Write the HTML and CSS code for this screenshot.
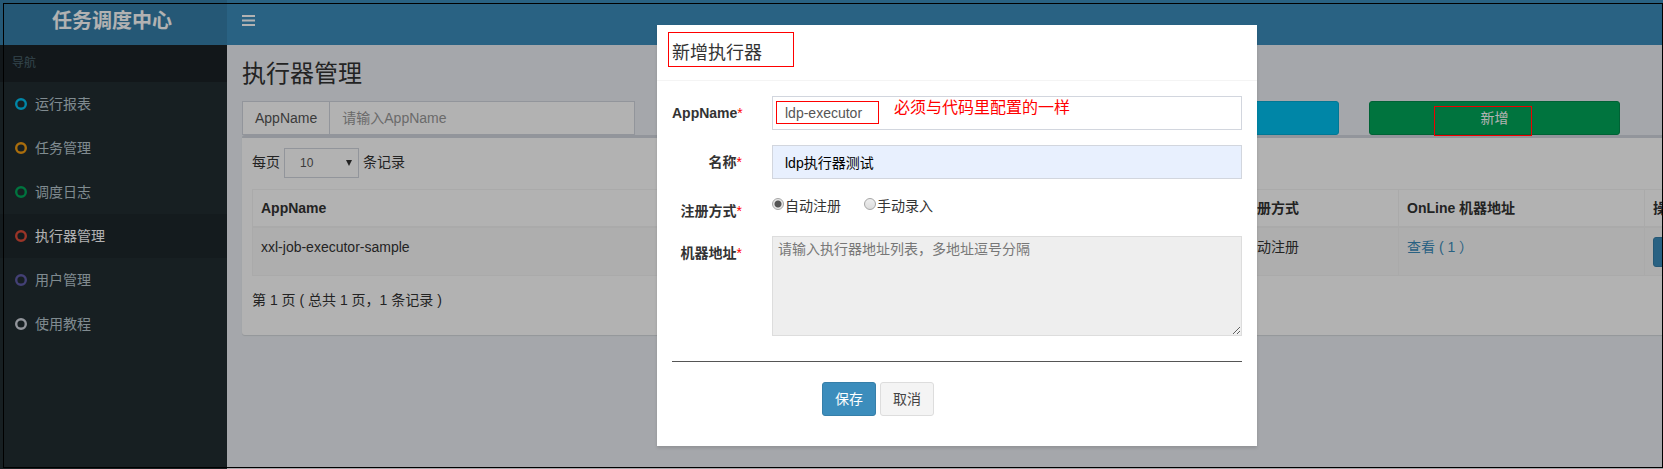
FILE: index.html
```html
<!DOCTYPE html>
<html lang="zh-CN">
<head>
<meta charset="utf-8">
<title>任务调度中心</title>
<link rel="stylesheet" href="styles.css">
</head>
<body>
<div class="app">
  <header class="topbar">
    <a class="logo" href="#">任务调度中心</a>
    <nav class="navbar">
      <button class="toggle" type="button" aria-label="切换导航">
        <svg width="13" height="11" viewBox="0 0 13 11"><path d="M0 0h13v2H0zM0 4.500h13v2H0zM0 9h13v2H0z" fill="#fff"/></svg>
      </button>
    </nav>
  </header>
  <div class="main">
    <aside class="sidebar">
      <div class="nav-title">导航</div>
      <a class="nav-item aqua" href="#"><svg class="ring" viewBox="0 0 12 12"><circle cx="6" cy="6" r="4.800"/></svg>运行报表</a>
      <a class="nav-item yellow" href="#"><svg class="ring" viewBox="0 0 12 12"><circle cx="6" cy="6" r="4.800"/></svg>任务管理</a>
      <a class="nav-item green" href="#"><svg class="ring" viewBox="0 0 12 12"><circle cx="6" cy="6" r="4.800"/></svg>调度日志</a>
      <a class="nav-item red active" href="#"><svg class="ring" viewBox="0 0 12 12"><circle cx="6" cy="6" r="4.800"/></svg>执行器管理</a>
      <a class="nav-item purple" href="#"><svg class="ring" viewBox="0 0 12 12"><circle cx="6" cy="6" r="4.800"/></svg>用户管理</a>
      <a class="nav-item gray" href="#"><svg class="ring" viewBox="0 0 12 12"><circle cx="6" cy="6" r="4.800"/></svg>使用教程</a>
    </aside>
    <main class="content">
      <h1 class="page-title">执行器管理</h1>
      <div class="filters">
        <div class="input-group">
          <label class="addon" for="q-app">AppName</label>
          <input class="input" id="q-app" type="text" placeholder="请输入AppName">
        </div>
        <button class="btn btn-info" type="button">搜索</button>
        <button class="btn btn-success" type="button">新增</button>
      </div>
      <section class="box">
        <div class="length">
          <label for="len">每页</label>
          <span class="select-wrap"><select class="select" id="len"><option>10</option></select></span>
          <span>条记录</span>
        </div>
        <table class="table">
          <colgroup><col><col><col class="col-type"><col class="col-online"><col class="col-action"></colgroup>
          <thead><tr><th>AppName</th><th>名称</th><th>注册方式</th><th>OnLine 机器地址</th><th>操作</th></tr></thead>
          <tbody><tr>
            <td>xxl-job-executor-sample</td><td>示例执行器</td><td>自动注册</td>
            <td><a class="link" href="#">查看 ( 1 ）</a></td>
            <td><button class="btn btn-primary btn-small" type="button">操作</button></td>
          </tr></tbody>
        </table>
        <div class="info">第 1 页 ( 总共 1 页，1 条记录 )</div>
      </section>
    </main>
  </div>
  <div class="backdrop">
    <div class="modal" role="dialog" aria-labelledby="modal-title">
      <div class="modal-header">
        <h4 class="modal-title" id="modal-title">新增执行器</h4>
        <span class="mark mark-title"></span>
      </div>
      <form class="modal-body">
        <div class="form-row">
          <label class="label" for="f-app">AppName<span class="star">*</span></label>
          <div class="field">
            <input class="input" id="f-app" type="text" value="ldp-executor">
            <span class="mark mark-field"></span>
            <span class="note">必须与代码里配置的一样</span>
          </div>
        </div>
        <div class="form-row">
          <label class="label" for="f-name">名称<span class="star">*</span></label>
          <div class="field"><input class="input autofill" id="f-name" type="text" value="ldp执行器测试"></div>
        </div>
        <div class="form-row">
          <span class="label" id="f-type">注册方式<span class="star">*</span></span>
          <div class="field radios" role="radiogroup" aria-labelledby="f-type">
            <label class="radio"><input type="radio" name="type" checked>自动注册</label>
            <label class="radio"><input type="radio" name="type">手动录入</label>
          </div>
        </div>
        <div class="form-row">
          <label class="label" for="f-addr">机器地址<span class="star">*</span></label>
          <div class="field"><textarea class="textarea" id="f-addr" readonly placeholder="请输入执行器地址列表，多地址逗号分隔"></textarea></div>
        </div>
        <hr class="rule">
        <div class="actions">
          <button class="btn btn-primary" type="button">保存</button>
          <button class="btn btn-default" type="button">取消</button>
        </div>
      </form>
    </div>
  </div>
  <span class="mark mark-add"></span>
</div>
<div class="frame"></div>
</body>
</html>
```
FILE: styles.css
```css
* { box-sizing: border-box; }
html, body { margin: 0; height: 100%; overflow: hidden; }
body {
  font: 14px/20px "Liberation Sans", "Noto Sans CJK SC", sans-serif;
  color: #333;
  background: #ecf0f5;
}
a { text-decoration: none; }
button, input, select, textarea { font: inherit; margin: 0; }

/* The console is wider than the window and runs off its right edge. */
.app {
  position: relative;
  width: calc(100% + 254px);
  min-height: 100%;
  display: flex;
  flex-direction: column;
}
.topbar { display: flex; height: 45px; background: #3c8dbc; }
.logo {
  width: 227px;
  padding-right: 3px;
  background: #367fa9;
  color: #fff;
  font-size: 20px;
  font-weight: bold;
  line-height: 42px;
  text-align: center;
}
.navbar { padding: 0 15px; }
.toggle { display: flex; padding: 15px 0; border: 0; background: none; }
.main { flex: 1; display: flex; }

.sidebar { width: 227px; background: #222d32; }
.nav-title {
  padding: 8px 12px 9px;
  background: #1a2226;
  color: #4b646f;
  font-size: 12px;
}
.nav-item {
  display: flex;
  align-items: center;
  gap: 8px;
  height: 44px;
  padding-left: 15px;
  color: #b8c7ce;
}
.nav-item.active { background: #1e282c; color: #fff; }
.ring { width: 12px; height: 12px; fill: none; stroke-width: 2.4; }
.aqua .ring { stroke: #00c0ef; }
.yellow .ring { stroke: #f39c12; }
.green .ring { stroke: #00a65a; }
.red .ring { stroke: #dd4b39; }
.purple .ring { stroke: #605ca8; }
.gray .ring { stroke: #d2d6de; }

.content { flex: 1; padding: 16px 10px 0 15px; }
.page-title { margin: 0 0 14px; font-size: 24px; font-weight: normal; line-height: 26px; }
.filters { display: grid; grid-template-columns: repeat(12, 1fr); column-gap: 30px; margin-right: 5px; }
.input-group { grid-column: 1 / span 3; display: flex; }
.addon {
  flex: none;
  padding: 6px 12px;
  border: 1px solid #d2d6de;
  border-right: 0;
  background: #fff;
  color: #555;
}
.input {
  display: block;
  width: 100%;
  min-width: 0;
  height: 34px;
  padding: 6px 12px;
  border: 1px solid #d2d6de;
  border-radius: 0;
  background: #fff;
  color: #555;
}
.input::placeholder { color: #999; opacity: 1; }
.input.autofill { background: #e8f0fe; color: #000; }
.btn {
  height: 34px;
  padding: 0 12px;
  border: 1px solid transparent;
  border-radius: 3px;
  color: #fff;
}
.btn-info { grid-column: 7 / span 2; background: #00c0ef; border-color: #00acd6; }
.btn-success { grid-column: 9 / span 2; background: #00a65a; border-color: #008d4c; }
.btn-primary { background: #3c8dbc; border-color: #367fa9; }
.btn-default { background: #f4f4f4; border-color: #ddd; color: #444; }
.btn-small { height: 30px; padding: 0 10px; font-size: 12px; display: block; }

.box {
  padding: 10px 0 25px 10px;
  border-top: 3px solid #d2d6de;
  border-radius: 3px;
  background: #fff;
  box-shadow: 0 1px 1px rgba(0, 0, 0, .1);
}
.length { display: flex; align-items: flex-start; gap: 4px; margin-bottom: 11px; line-height: 28px; }
.select-wrap { position: relative; display: block; }
.select-wrap::after {
  content: "";
  position: absolute;
  right: 7px;
  top: 12px;
  width: 6px;
  height: 6px;
  background: #333;
  clip-path: polygon(0 0, 100% 0, 50% 100%);
}
.select {
  display: block;
  appearance: none;
  width: 75px;
  height: 30px;
  padding: 0 15px;
  border: 1px solid #d2d6de;
  border-radius: 0;
  background: #fff;
  color: #555;
  font-size: 12px;
}
.table { width: 100%; table-layout: fixed; border-collapse: separate; border-spacing: 0; border: 1px solid #f4f4f4; }
.table th, .table td { padding: 8px; text-align: left; vertical-align: top; border-right: 1px solid #f4f4f4; }
.table th { border-bottom: 2px solid #f4f4f4; }
.table td { padding-top: 9px; background: #f9f9f9; }
.col-type { width: 164px; }
.col-online { width: 246px; }
.col-action { width: 261px; }
.link { color: #3c8dbc; }
.info { padding-top: 14px; }

.backdrop {
  position: absolute;
  inset: 0;
  padding: 25px 3px 0 0;
  background: rgba(0, 0, 0, .3);
}
.modal {
  width: 600px;
  margin: 0 auto;
  background: #fff;
  box-shadow: 0 2px 3px rgba(0, 0, 0, .125);
}
.modal-header { position: relative; padding: 16px 15px 14px; border-bottom: 1px solid #f4f4f4; }
.modal-title { margin: 0; font-size: 18px; font-weight: normal; line-height: 25px; }
.modal-body { padding: 15px 15px 30px; }
.form-row { display: flex; gap: 30px; margin-bottom: 15px; }
.label { width: 70px; padding-top: 7px; font-weight: bold; text-align: right; white-space: nowrap; }
.star { color: red; font-weight: normal; }
.field { position: relative; flex: 1; }
.radios { display: flex; gap: 23px; padding-top: 2px; }
.radio { display: flex; align-items: flex-start; gap: 1px; }
.radio input {
  appearance: none;
  width: 12px;
  height: 12px;
  margin-top: 2px;
  border: 1px solid #a6a6a6;
  border-radius: 50%;
  background: linear-gradient(#eee, #ddd);
}
.radio input:checked { background: radial-gradient(circle, #555 0 3px, #e6e6e6 4px); }
.textarea {
  display: block;
  width: 100%;
  height: 100px;
  padding: 2px 5px;
  border: 1px solid #ddd;
  background: #eee;
  resize: both;
}
.textarea::placeholder { color: #777; opacity: 1; }
.rule { margin: 25px 0 20px; border: 0; border-top: 1px solid #555; }
.actions { display: flex; gap: 4px; padding-left: 150px; }

/* Red call-outs and the outer frame, drawn over the screen. */
.mark { position: absolute; border: 1px solid red; pointer-events: none; }
.mark-title { left: 11px; top: 7px; width: 126px; height: 35px; }
.mark-field { left: 4px; top: 5px; width: 103px; height: 23px; }
.mark-add { left: 1434px; top: 106px; width: 98px; height: 30px; border-color: #e00; }
.note { position: absolute; left: 122px; top: 2px; color: red; font-size: 16px; white-space: nowrap; }
.frame { position: fixed; inset: 3px 0 1px 3px; border: 1px solid #000; pointer-events: none; }
```
